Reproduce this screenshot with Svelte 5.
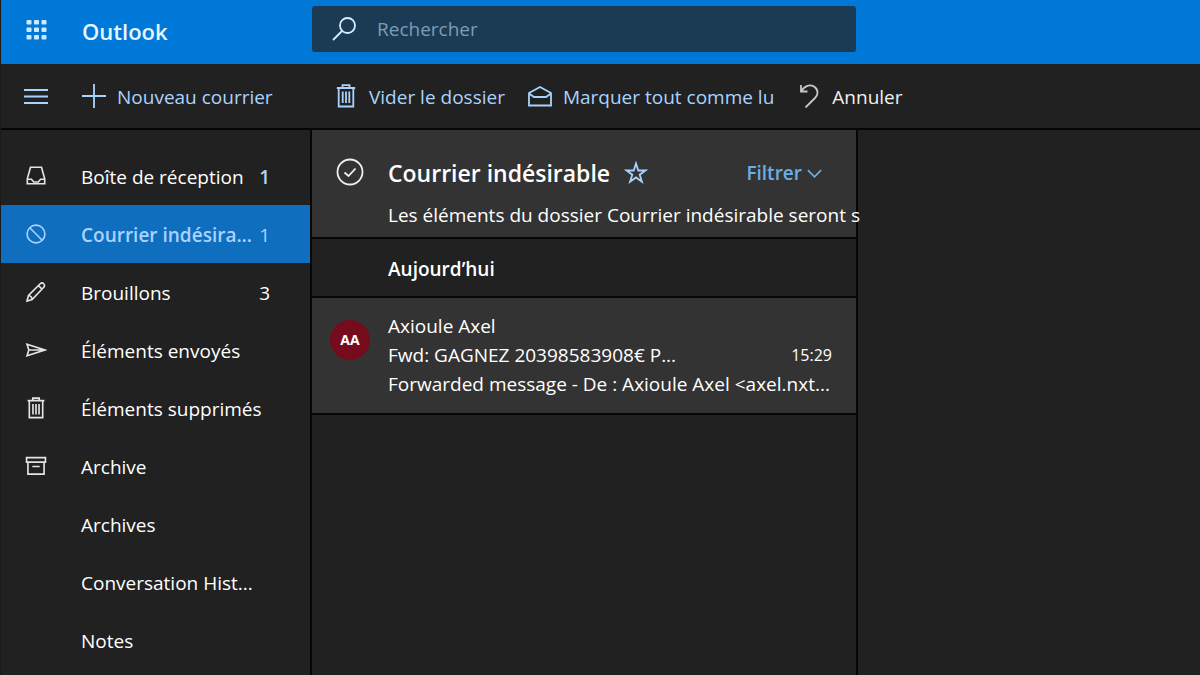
<script lang="ts">
  let search = $state('');
  let selected = $state('junk');

  const folders = [
    { id: 'inbox', name: 'Boîte de réception', count: 1, unread: true },
    { id: 'junk', name: 'Courrier indésira...', count: 1 },
    { id: 'drafts', name: 'Brouillons', count: 3 },
    { id: 'sent', name: 'Éléments envoyés' },
    { id: 'trash', name: 'Éléments supprimés' },
    { id: 'archive', name: 'Archive' },
    { id: 'archives', name: 'Archives' },
    { id: 'history', name: 'Conversation Hist...' },
    { id: 'notes', name: 'Notes' }
  ];

  const messages = [
    {
      id: 1,
      initials: 'AA',
      from: 'Axioule Axel',
      subject: 'Fwd: GAGNEZ 20398583908€ P...',
      time: '15:29',
      preview: 'Forwarded message - De : Axioule Axel <axel.nxt...'
    }
  ];
</script>

{#snippet icon(name)}
  <svg class="icon" viewBox="0 0 24 24" aria-hidden="true">
    {#if name === 'inbox'}
      <path d="M6 2.500h12l3.500 12.500v5.500h-19v-5.500z M2.500 15.500h4.500l2.500 3h5l2.500-3h4.500" />
    {:else if name === 'junk'}
      <circle cx="12" cy="12" r="9.7" />
      <path d="M5.2 5.2l13.6 13.6" />
    {:else if name === 'drafts'}
      <path d="M2.2 21.8l1.6-6L16.6 3c1.3-1.2 2.8-1 3.8 0s1.2 2.5 0 3.8L7.8 20.2z M14.7 5l4 4 M3.800 15.800c2.200.2 3.800 1.800 4 4.400" />
    {:else if name === 'sent'}
      <path d="M2.2 5.800l19.300 6.200-19.300 6.200 2-6.200z M4.200 12h17" />
    {:else if name === 'trash'}
      <path d="M2.800 4h18.400 M8.500 4v-2.800h7v2.800 M4.700 4v18.500h14.600v-18.500 M8.700 7.500v11.500 M12 7.500v11.500 M15.300 7.500v11.500" />
    {:else if name === 'archive'}
      <path d="M1.700 2.800h20.600v5H1.700z M3.200 7.800v13h17.600v-13 M8 12.500h8" />
    {/if}
  </svg>
{/snippet}

<div class="app">
  <header>
    <div class="brand">
      <button class="rail" aria-label="Lanceur d'applications">
        <svg class="icon waffle" viewBox="0 0 24 24" aria-hidden="true">
          {#each [2, 9.5, 17] as y}
            {#each [2.5, 10, 17.5] as x}
              <rect {x} {y} width="5" height="4.500" rx="1" />
            {/each}
          {/each}
        </svg>
      </button>
      <a href="#outlook">Outlook</a>
    </div>
    <label class="search">
      <svg viewBox="0 0 24 24" aria-hidden="true">
        <circle cx="15.500" cy="8.500" r="7.500" />
        <path d="M10 14L1 23" />
      </svg>
      <input type="text" placeholder="Rechercher" aria-label="Rechercher" bind:value={search} />
    </label>
  </header>

  <div class="toolbar">
    <div class="new-mail">
      <button class="rail" aria-label="Menu">
        <svg class="icon" viewBox="0 0 24 24" aria-hidden="true"><path d="M0 6h24M0 12.500h24M0 19h24" /></svg>
      </button>
      <button>
        <svg class="icon" viewBox="0 0 24 24" aria-hidden="true"><path d="M12 0v24M0 12h24" /></svg>
        <span>Nouveau courrier</span>
      </button>
    </div>
    <div class="commands">
      <button>{@render icon('trash')}<span>Vider le dossier</span></button>
      <button>
        <svg class="icon" viewBox="0 0 24 24" aria-hidden="true">
          <path d="M1 9l11-6 11 6v12.500H1z M1 9.500l5 3.500h12l5-3.500" />
        </svg>
        <span>Marquer tout comme lu</span>
      </button>
      <button class="undo">
        <svg class="icon" viewBox="0 0 24 24" aria-hidden="true">
          <path d="M4 1v6.500h6.500 M4 7.500C7.500 1.500 13 0 17 2.500c4.500 3 4.500 8 1 11.500L8.500 23.500" />
        </svg>
        <span>Annuler</span>
      </button>
    </div>
  </div>

  <main>
    <nav aria-label="Dossiers">
      {#each folders as folder (folder.id)}
        <button class="folder" class:selected={selected === folder.id} onclick={() => (selected = folder.id)}>
          {@render icon(folder.id)}
          <span class="name">{folder.name}</span>
          {#if folder.count}
            <span class="count" class:unread={folder.unread}>{folder.count}</span>
          {/if}
        </button>
      {/each}
    </nav>

    <section class="list">
      <div class="list-header">
        <button class="check" aria-label="Tout sélectionner">
          <svg viewBox="0 0 28 28" aria-hidden="true">
            <circle cx="14" cy="14" r="12.500" />
            <path d="M8.500 14.500l4 3.500 7-7.500" />
          </svg>
        </button>
        <div class="list-title">
          <h1>Courrier indésirable</h1>
          <button class="star" aria-label="Favori">
            <svg class="icon" viewBox="0 0 24 24" aria-hidden="true">
              <path d="M12 2.500l2.300 7h7.200l-5.800 4.200 2.200 7-5.900-4.300L6.100 20.700l2.200-7-5.800-4.200h7.200z" />
            </svg>
          </button>
          <button class="filter">
            Filtrer
            <svg viewBox="0 0 16 16" aria-hidden="true"><path d="M1 4.500l7 7 7-7" /></svg>
          </button>
        </div>
        <p>Les éléments du dossier Courrier indésirable seront s</p>
      </div>

      <h2>Aujourd’hui</h2>

      {#each messages as message (message.id)}
        <article>
          <span class="avatar">{message.initials}</span>
          <div class="message">
            <div>{message.from}</div>
            <div class="subject">
              <span>{message.subject}</span>
              <time>{message.time}</time>
            </div>
            <div>{message.preview}</div>
          </div>
        </article>
      {/each}
    </section>

    <section class="reading"></section>
  </main>
</div>

<style>
  :global(body) {
    margin: 0;
    background: #212121;
  }

  .app {
    display: flex;
    flex-direction: column;
    box-sizing: border-box;
    height: 100vh;
    overflow: hidden;
    border-left: 1px solid #1a1a1a;
    color: #fff;
    font-family: 'Segoe UI', 'Open Sans', sans-serif;
    font-size: 19px;
    line-height: 29px;
  }

  button {
    display: flex;
    align-items: center;
    padding: 0;
    border: 0;
    background: none;
    color: inherit;
    font: inherit;
    white-space: nowrap;
  }

  svg {
    flex: none;
    fill: none;
    stroke: currentColor;
    stroke-width: 1.8;
  }

  .icon {
    width: 24px;
    height: 24px;
  }

  header,
  .toolbar,
  main {
    display: grid;
    grid-template-columns: 311px minmax(320px, 544px) 1fr;
  }

  header {
    flex: none;
    height: 64px;
    background: #0078d7;
  }

  .brand,
  .new-mail {
    display: flex;
    align-items: center;
  }

  .rail {
    width: 81px;
    padding-left: 23px;
    box-sizing: border-box;
  }

  .waffle {
    fill: #cfeaff;
    stroke: none;
  }

  .brand a {
    padding-bottom: 2px;
    color: #e8f5ff;
    font-size: 22px;
    font-weight: 600;
    text-decoration: none;
  }

  .brand .rail {
    padding-bottom: 4px;
  }

  .search {
    display: flex;
    align-items: center;
    gap: 21px;
    height: 46px;
    margin-top: 6px;
    padding: 0 20px;
    border-radius: 3px;
    background: #1b3a54;
  }

  .search svg {
    width: 24px;
    height: 24px;
    color: #d5ecff;
  }

  .search input {
    flex: 1;
    min-width: 0;
    padding: 0;
    border: 0;
    outline: none;
    background: none;
    color: #fff;
    font: inherit;
  }

  .search input::placeholder {
    color: #7d9cb6;
    opacity: 1;
  }

  .toolbar {
    flex: none;
    height: 64px;
    border-bottom: 2px solid #060606;
    color: #a9d3ff;
  }

  .toolbar button:not(.rail) {
    gap: 11px;
  }

  .toolbar span,
  .folder span {
    padding-top: 3px;
  }

  .commands {
    grid-column: 2 / 4;
    display: flex;
    align-items: center;
    gap: 23px;
    padding-left: 22px;
  }

  .commands .undo {
    color: #f0f0f0;
  }

  .undo svg {
    color: #c8c8c8;
  }

  main {
    flex: 1;
    min-height: 0;
  }

  nav {
    padding-top: 17px;
    overflow: hidden;
  }

  .folder {
    width: calc(100% - 2px);
    height: 58px;
    padding: 0 40px 0 24px;
  }

  .folder .icon {
    width: 22px;
    height: 22px;
    color: #e4e4e4;
  }

  .name {
    flex: 1;
    margin-left: 34px;
    text-align: left;
  }

  .count.unread {
    color: #a9d3ff;
    font-weight: 600;
  }

  .folder.selected {
    background: #106ebe;
    color: #a9d3ff;
  }

  .folder.selected .icon {
    color: #a9d3ff;
  }

  .selected .name {
    font-weight: 600;
  }

  .list {
    min-width: 0;
    box-shadow: 0 0 0 2px #060606;
  }

  .list-header {
    display: grid;
    grid-template-columns: 76px minmax(0, 1fr);
    padding: 24px 0 6px;
    border-bottom: 2px solid #060606;
    background: #333;
  }

  .check {
    padding: 0 0 2px 24px;
  }

  .check svg {
    width: 28px;
    height: 28px;
    color: #f0f0f0;
  }

  .list-title {
    display: flex;
    align-items: center;
    height: 38px;
    padding-right: 34px;
  }

  h1,
  h2,
  p {
    margin: 0;
  }

  h1 {
    font-size: 23px;
    font-weight: 600;
    white-space: nowrap;
  }

  .star {
    margin-left: 14px;
    color: #a9d3ff;
  }

  .filter {
    gap: 5px;
    margin-left: auto;
    color: #69afe5;
    font-weight: 600;
  }

  .filter svg {
    width: 15px;
    height: 15px;
  }

  .list-header p {
    grid-column: 2;
    padding: 9px 0 1px;
    white-space: nowrap;
  }

  h2 {
    padding: 16px 76px 12px;
    border-bottom: 2px solid #060606;
    font-size: 19px;
    font-weight: 600;
  }

  article {
    display: flex;
    gap: 18px;
    padding: 14px 24px 14px 18px;
    border-bottom: 2px solid #060606;
    background: #333;
  }

  .avatar {
    flex: none;
    width: 40px;
    height: 40px;
    margin-top: 8px;
    border-radius: 50%;
    background: #750b1c;
    font-size: 14px;
    font-weight: 700;
    line-height: 40px;
    text-align: center;
  }

  .message {
    flex: 1;
    min-width: 0;
    white-space: nowrap;
  }

  .subject {
    display: flex;
    justify-content: space-between;
  }

  time {
    font-size: 16px;
  }
</style>
